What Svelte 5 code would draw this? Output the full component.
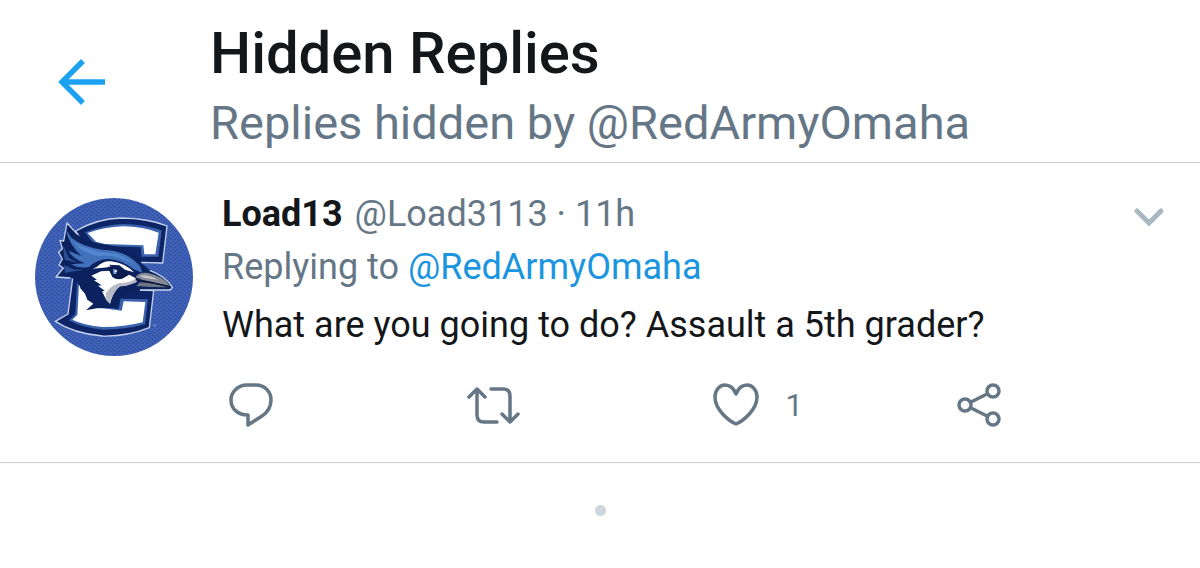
<script lang="ts">
  interface Reply {
    name: string;
    handle: string;
    age: string;
    replyingTo: string;
    text: string;
    likes: number;
  }

  const account = '@RedArmyOmaha';

  const replies: Reply[] = [
    {
      name: 'Load13',
      handle: '@Load3113',
      age: '11h',
      replyingTo: account,
      text: 'What are you going to do? Assault a 5th grader?',
      likes: 1,
    },
  ];
</script>

<header class="topbar">
  <button class="back" aria-label="Back">
    <svg viewBox="0 0 48 48" fill="none" stroke="currentColor" stroke-width="5.5" aria-hidden="true">
      <path d="M25 3L4 24L25 45M4 24H47" />
    </svg>
  </button>
  <div class="heading">
    <h1>Hidden Replies</h1>
    <p>Replies hidden by {account}</p>
  </div>
</header>

<main>
  {#each replies as reply}
    <article class="reply">
      <svg class="avatar" viewBox="30 24 474 474" role="img" aria-label="{reply.name} avatar">
        <defs>
          <pattern id="mesh" width="14" height="12" patternUnits="userSpaceOnUse">
            <rect width="14" height="12" fill="#3f62b8" />
            <rect x="2" y="2" width="4" height="4" fill="#2b4897" />
            <rect x="9" y="8" width="4" height="4" fill="#2b4897" />
          </pattern>
          <clipPath id="round"><circle cx="267" cy="261" r="237" /></clipPath>
        </defs>
        <g clip-path="url(#round)">
          <rect x="30" y="24" width="474" height="474" fill="url(#mesh)" />
          <!-- letter block -->
          <path d="M152 123Q215 86 290 84Q370 85 426 108L413 219L350 217L346 300L386 302L373 413Q305 440 232 438Q145 430 91 394L129 372L143 265L190 180Z" fill="#0d2466" stroke="#c5d2ec" stroke-width="4" stroke-linejoin="round" />
          <path d="M180 127Q238 104 294 102Q357 103 410 121L400 200L350 200L347 172L236 168L205 159ZM156 278L192 312L204 347L281 357L287 326L369 328L360 403Q302 419 232 419Q174 414 132 391L151 372Z" fill="#3b62ad" />
          <path d="M188 129Q238 111 294 109Q355 110 401 128L391 193L358 193L355 166L239 162L213 155Z" fill="#fff" />
          <path d="M162 286L190 312L211 352L290 362L296 334L361 336L353 397Q300 411 232 411Q178 406 142 389L157 374Z" fill="#fff" />
          <!-- bird -->
          <path d="M126 99L158 134Q178 150 215 159L285 172Q328 183 350 220L374 241Q424 260 442 292L436 300L345 300L318 309L284 319L274 353L216 355L183 361L205 341L187 329L180 311L166 295L162 276L136 262L93 261L115 234L102 225L112 207L101 187L112 176L105 151L116 153Z" fill="#0c225e" />
          <path d="M158 134L126 99L116 153L105 151L112 176L101 187L112 207L102 225L115 234L93 261L136 264M374 241Q424 260 442 292L436 300L345 300" fill="none" stroke="#c5d2ec" stroke-width="4" stroke-linejoin="round" />
          <path d="M122 118L139 143Q172 170 232 179Q307 181 345 229L352 248L326 238Q290 209 250 207Q217 207 192 231Q162 237 137 223L180 220Q143 207 131 182L171 199Q134 169 122 118Z" fill="#4271bb" />
          <path d="M145 155Q180 178 235 187Q297 190 330 225Q270 190 220 198Q170 189 145 155Z" fill="#5386cc" />
          <path d="M114 165L132 204L160 219L119 209ZM117 225L145 238L178 239L120 248Z" fill="#2b5098" />
          <path d="M215 231Q235 211 259 214Q304 221 327 247L300 239L283 226L253 224L257 231L203 236Z" fill="#fff" />
          <path d="M199 257L228 244L258 242L265 262L288 266L310 253L331 264L336 275Q309 287 285 289Q265 303 255 341L244 330L231 304L240 303L219 287L230 286L207 271L216 269Z" fill="#fff" />
          <path d="M336 275Q309 287 285 289Q265 303 255 341L244 330L242 310Q260 285 283 279Q309 281 330 267Z" fill="#b8bbc5" />
          <path d="M247 230L274 230L302 244L319 250L296 264Q278 273 262 261Z" fill="#0a1b4e" />
          <path d="M264 236L278 240L273 252L265 252Z" fill="#719ad3" />
          <circle cx="272" cy="244" r="3" fill="#fff" />
          <path d="M337 255Q350 246 369 249Q415 259 435 288Q389 277 355 271L332 262Z" fill="#868a95" />
          <path d="M342 257Q369 251 398 269L359 264Z" fill="#c4c6cc" />
          <path d="M344 277L390 281L432 292L377 291L334 288Z" fill="#6f7583" />
          <path d="M332 269L361 274L433 290" fill="none" stroke="#0c1738" stroke-width="4" />
          <path d="M384 403L393 409M393 402L385 409" stroke="#8099d4" stroke-width="2" />
        </g>
      </svg>

      <div class="body">
        <div class="meta">
          <div class="byline">
            <strong>{reply.name}</strong>
            <span>{reply.handle} · {reply.age}</span>
          </div>
          <button class="more" aria-label="More options">
            <svg viewBox="0 0 32 20" fill="none" stroke="currentColor" stroke-width="5" stroke-linecap="round" aria-hidden="true">
              <path d="M4 4L16 16L28 4" />
            </svg>
          </button>
        </div>
        <p class="context">Replying to <a href="#profile">{reply.replyingTo}</a></p>
        <p class="text">{reply.text}</p>

        <div class="actions">
          <button aria-label="Reply">
            <svg viewBox="0 0 60 48" aria-hidden="true">
              <path d="M25 5H34C43 5 49 12 49 20C49 27 46 32 40 36L26 45V35C16 35 9 29 9 20C9 12 16 5 25 5Z" />
            </svg>
          </button>
          <button aria-label="Retweet">
            <svg viewBox="0 0 60 48" aria-hidden="true">
              <path d="M4 17L12 9L20 17M12 10V35Q12 42 19 42H32M26 9H38Q45 9 45 16V41M37 34L45 42L53 34" />
            </svg>
          </button>
          <button aria-label="Like">
            <svg viewBox="0 0 60 48" aria-hidden="true">
              <path d="M28 14C26 9 23 5 17 5C11 5 7 11 7 17C7 30 21 41 28 44C35 41 49 30 49 17C49 11 45 5 39 5C33 5 30 9 28 14Z" />
            </svg>
            <span class="count">{reply.likes}</span>
          </button>
          <button aria-label="Share">
            <svg viewBox="0 0 60 48" aria-hidden="true">
              <circle cx="15" cy="25" r="6" />
              <circle cx="43" cy="11" r="6" />
              <circle cx="43" cy="39" r="6" />
              <path d="M21 22L37 14M21 28L37 36" />
            </svg>
          </button>
        </div>
      </div>
    </article>
  {/each}
  <div class="end"></div>
</main>

<style>
  :global(body) {
    margin: 0;
    background: #fff;
    color: #14171a;
    font-family: Roboto, "Liberation Sans", sans-serif;
  }

  h1,
  p {
    margin: 0;
  }

  button {
    padding: 0;
    border: none;
    background: none;
    color: inherit;
    font: inherit;
    cursor: pointer;
  }

  svg {
    display: block;
    flex: none;
  }

  .topbar {
    display: flex;
    align-items: flex-start;
    gap: 104px;
    padding: 18px 36px 4px 58px;
    border-bottom: 1px solid #c6ccd2;
  }

  .back {
    margin-top: 40px;
    color: #1da1f2;
  }

  .back svg {
    width: 48px;
    height: 48px;
  }

  .heading h1 {
    font-size: 58px;
    font-weight: 500;
    line-height: 70px;
  }

  .heading p {
    color: #657786;
    font-size: 47px;
    line-height: 70px;
  }

  .reply {
    display: flex;
    align-items: flex-start;
    gap: 29px;
    padding: 25px 7px 34px 35px;
    border-bottom: 1px solid #c6ccd2;
  }

  .avatar {
    width: 158px;
    height: 158px;
    margin-top: 10px;
  }

  .body {
    flex: 1;
    min-width: 0;
    font-size: 36px;
  }

  .meta {
    display: flex;
    align-items: center;
    justify-content: space-between;
    padding-right: 28px;
    line-height: 52px;
  }

  .byline span,
  .context {
    color: #657786;
  }

  .byline span {
    margin-left: 3px;
  }

  .more {
    padding-top: 6px;
    color: #aab8c2;
  }

  .more svg {
    width: 32px;
    height: 20px;
  }

  .context {
    line-height: 54px;
  }

  .context a {
    color: #1b95e0;
    text-decoration: none;
  }

  .text {
    line-height: 62px;
  }

  .actions {
    display: grid;
    grid-template-columns: repeat(4, 1fr);
    margin-top: 24px;
    color: #657786;
  }

  .actions button {
    display: flex;
    align-items: center;
    gap: 18px;
  }

  .actions svg {
    width: 60px;
    height: 48px;
    fill: none;
    stroke: currentColor;
    stroke-width: 3.5;
    stroke-linecap: round;
    stroke-linejoin: round;
  }

  .count {
    padding-top: 4px;
    font-size: 31px;
    line-height: 44px;
  }

  .end {
    width: 11px;
    height: 11px;
    margin: 42px auto;
    border-radius: 50%;
    background: #ccd6dd;
  }
</style>
